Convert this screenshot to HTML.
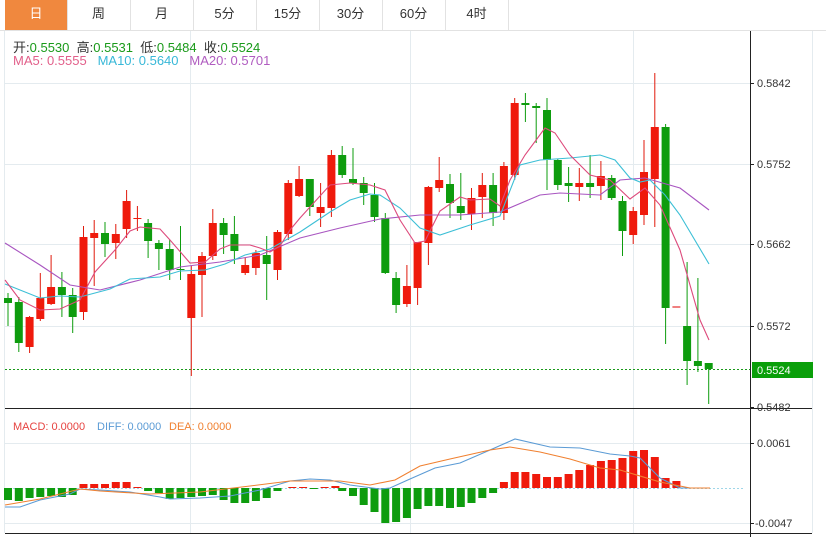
<!DOCTYPE html>
<html><head><meta charset="utf-8"><style>
body{margin:0;width:826px;height:537px;background:#fff;overflow:hidden;font-family:"Liberation Sans","Noto Sans CJK SC",sans-serif;position:relative}
.tabs{position:absolute;left:0;top:0;height:30px;width:826px;border-bottom:1px solid #e2e2e2}
.tab{position:absolute;top:0;height:30px;line-height:28px;text-align:center;font-size:13px;color:#333;border-right:1px solid #e2e2e2}
.on{background:#f0883e;color:#fff}
.info{position:absolute;left:13px;font-size:13px;white-space:pre}
</style></head><body>
<div class="tabs">
<div class="tab on" style="left:5px;width:62px">日</div>
<div class="tab" style="left:67px;width:63px">周</div>
<div class="tab" style="left:130px;width:63px">月</div>
<div class="tab" style="left:193px;width:63px">5分</div>
<div class="tab" style="left:256px;width:63px">15分</div>
<div class="tab" style="left:319px;width:63px">30分</div>
<div class="tab" style="left:382px;width:63px">60分</div>
<div class="tab" style="left:445px;width:63px">4时</div>
</div>
<svg width="826" height="537" style="position:absolute;left:0;top:0">
<g stroke="#e4ebef" stroke-width="1">
<line x1="5" y1="83.5" x2="750" y2="83.5"/><line x1="5" y1="164.5" x2="750" y2="164.5"/><line x1="5" y1="244.5" x2="750" y2="244.5"/><line x1="5" y1="326.5" x2="750" y2="326.5"/>
<line x1="5" y1="443.5" x2="750" y2="443.5"/><line x1="5" y1="523.5" x2="750" y2="523.5"/>
<line x1="190.5" y1="31" x2="190.5" y2="533"/><line x1="410.5" y1="31" x2="410.5" y2="533"/><line x1="633.5" y1="31" x2="633.5" y2="533"/>
<line x1="4.5" y1="31" x2="4.5" y2="533"/><line x1="812.5" y1="31" x2="812.5" y2="533"/>
</g>
<g stroke="#222" stroke-width="1">
<line x1="750.5" y1="31" x2="750.5" y2="537"/>
<line x1="5" y1="408.5" x2="812" y2="408.5"/>
<line x1="5" y1="533.5" x2="812" y2="533.5"/>
<line x1="750" y1="83.5" x2="754" y2="83.5"/><line x1="750" y1="164.5" x2="754" y2="164.5"/><line x1="750" y1="244.5" x2="754" y2="244.5"/><line x1="750" y1="326.5" x2="754" y2="326.5"/><line x1="750" y1="407.5" x2="754" y2="407.5"/>
<line x1="750" y1="443.5" x2="754" y2="443.5"/><line x1="750" y1="523.5" x2="754" y2="523.5"/>
</g>
<g font-size="11" fill="#333" font-family="Liberation Sans,sans-serif">
<text x="757" y="87">0.5842</text><text x="757" y="168">0.5752</text><text x="757" y="248">0.5662</text><text x="757" y="330">0.5572</text><text x="757" y="411">0.5482</text>
<text x="757" y="447">0.0061</text><text x="755" y="527">-0.0047</text>
</g>
<line x1="5" y1="369.5" x2="750" y2="369.5" stroke="#1a9a1a" stroke-dasharray="2,2"/>
<rect x="752" y="362" width="61" height="16" fill="#0a9f0a"/>
<text x="757" y="374" font-size="11" fill="#fff">0.5524</text>
<g fill="#0e9c0e" stroke="#0e9c0e">
<path fill="none" d="M8 293V326M18.8 297V352M61.9 272V317M72.7 288V333M105 222V257M148.1 219V258M158.9 240V270M169.7 240V280M180.5 226V280M223.6 218V254M234.4 216V264M266.7 236V300M309.8 179V216M342.2 146V178M353 148V185M363.7 177V205M374.5 183V222M385.3 213V274M396.1 272V313M450 174V218M460.8 173V220M493.1 173V226M525.4 93V122M536.2 103V143M547 98V190M557.8 159V190M568.6 167V202M590.1 155V198M611.7 175V200M622.5 196V256M665.6 124V344M687.1 262V385M697.9 278V372M708.7 363V404"/>
<g stroke="none">
<rect x="4" y="298" width="8" height="5"/><rect x="14.8" y="302" width="8" height="41"/><rect x="57.9" y="287" width="8" height="8"/><rect x="68.7" y="295" width="8" height="22"/><rect x="101" y="233" width="8" height="11"/><rect x="144.1" y="223" width="8" height="18"/><rect x="154.9" y="243" width="8" height="6"/><rect x="165.7" y="249" width="8" height="21"/><rect x="176.5" y="269" width="8" height="1"/><rect x="219.6" y="223" width="8" height="12"/><rect x="230.4" y="234" width="8" height="17"/><rect x="262.7" y="255" width="8" height="9"/><rect x="305.8" y="179" width="8" height="28"/><rect x="338.2" y="155" width="8" height="20"/><rect x="349" y="179" width="8" height="4"/><rect x="359.7" y="183" width="8" height="10"/><rect x="370.5" y="195" width="8" height="22"/><rect x="381.3" y="218" width="8" height="55"/><rect x="392.1" y="278" width="8" height="27"/><rect x="446" y="184" width="8" height="19"/><rect x="456.8" y="206" width="8" height="7"/><rect x="489.1" y="185" width="8" height="28"/><rect x="521.4" y="103" width="8" height="2"/><rect x="532.2" y="106" width="8" height="2"/><rect x="543" y="110" width="8" height="50"/><rect x="553.8" y="160" width="8" height="25"/><rect x="564.6" y="183" width="8" height="3"/><rect x="586.1" y="183" width="8" height="4"/><rect x="607.7" y="178" width="8" height="20"/><rect x="618.5" y="201" width="8" height="30"/><rect x="661.6" y="127" width="8" height="181"/><rect x="683.1" y="326" width="8" height="35"/><rect x="693.9" y="361" width="8" height="5"/><rect x="704.7" y="363" width="8" height="6"/>
</g></g>
<g fill="#ef1a0c" stroke="#e01a0c">
<path fill="none" d="M29.6 316V353M40.3 273V321M51.1 255V305M83.5 226V320M94.2 220V286M115.8 224V259M126.6 190V238M137.4 206V231M191.3 266V376M202 252V317M212.8 209V260M245.2 258V275M255.9 250V275M277.5 230V280M288.3 180V240M299.1 166V197M320.6 183V227M331.4 150V217M406.9 265V307M417.6 242V305M428.4 186V265M439.2 157V192M471.5 188V230M482.3 173V218M503.9 162V220M514.7 98V180M579.3 168V201M600.9 161V200M633.2 207V244M644 140V225M654.8 73V227"/>
<g stroke="none">
<rect x="25.6" y="317" width="8" height="30"/><rect x="36.3" y="298" width="8" height="21"/><rect x="47.1" y="287" width="8" height="17"/><rect x="79.5" y="237" width="8" height="75"/><rect x="90.2" y="233" width="8" height="5"/><rect x="111.8" y="234" width="8" height="9"/><rect x="122.6" y="201" width="8" height="28"/><rect x="133.4" y="218" width="8" height="1"/><rect x="187.3" y="274" width="8" height="44"/><rect x="198" y="256" width="8" height="19"/><rect x="208.8" y="223" width="8" height="33"/><rect x="241.2" y="265" width="8" height="8"/><rect x="251.9" y="253" width="8" height="15"/><rect x="273.5" y="232" width="8" height="38"/><rect x="284.3" y="183" width="8" height="51"/><rect x="295.1" y="179" width="8" height="17"/><rect x="316.6" y="207" width="8" height="6"/><rect x="327.4" y="155" width="8" height="53"/><rect x="402.9" y="286" width="8" height="18"/><rect x="413.6" y="242" width="8" height="46"/><rect x="424.4" y="187" width="8" height="56"/><rect x="435.2" y="180" width="8" height="8"/><rect x="467.5" y="198" width="8" height="16"/><rect x="478.3" y="185" width="8" height="12"/><rect x="499.9" y="166" width="8" height="47"/><rect x="510.7" y="103" width="8" height="72"/><rect x="575.3" y="183" width="8" height="4"/><rect x="596.9" y="176" width="8" height="10"/><rect x="629.2" y="211" width="8" height="24"/><rect x="640" y="172" width="8" height="43"/><rect x="650.8" y="127" width="8" height="52"/><rect x="672.4" y="306" width="8" height="2" fill="#f08080"/>
</g></g>
<g fill="none" stroke-width="1.1">
<polyline stroke="#a855c0" points="5,243 40,265 70,285 100,290 140,280 180,267 220,262 260,255 300,238 340,228 380,219 420,215 460,215 500,212 540,195 560,193 600,195 620,180 645,178 680,188 709,210"/>
<polyline stroke="#3cbfd6" points="5,284 40,298 60,296 80,297 110,289 130,279 160,277 180,271 205,270 225,264 245,255 270,249 300,232 330,212 350,200 370,194 380,195 400,208 420,228 440,235 470,225 500,216 520,165 540,160 570,158 600,155 615,160 630,178 640,182 650,180 665,195 680,215 709,264"/>
<polyline stroke="#dd4a7c" points="5,280 20,300 40,310 60,309 80,300 95,272 115,250 130,231 140,227 160,229 170,240 190,263 205,262 220,249 230,245 250,245 260,248 270,252 280,246 290,230 300,218 310,207 330,185 350,183 370,185 385,190 400,220 415,243 425,241 440,211 460,197 470,200 490,199 500,206 510,180 525,155 545,128 555,133 570,155 590,175 610,180 630,199 645,188 660,205 680,250 700,320 709,340"/>
</g>
<line x1="5" y1="488.5" x2="745" y2="488.5" stroke="#9fd6e8" stroke-dasharray="2,2"/>
<g fill="#0e9c0e">
<rect x="4" y="488" width="8" height="12"/><rect x="14.8" y="488" width="8" height="13"/><rect x="25.6" y="488" width="8" height="10"/><rect x="36.3" y="488" width="8" height="9"/><rect x="47.1" y="488" width="8" height="8"/><rect x="57.9" y="488" width="8" height="9"/><rect x="68.7" y="488" width="8" height="7"/>
<rect x="144.1" y="488" width="8" height="3"/><rect x="154.9" y="488" width="8" height="5"/><rect x="165.7" y="488" width="8" height="11"/><rect x="176.5" y="488" width="8" height="10"/><rect x="187.3" y="488" width="8" height="9"/><rect x="198" y="488" width="8" height="8"/><rect x="208.8" y="488" width="8" height="7"/><rect x="219.6" y="488" width="8" height="12"/><rect x="230.4" y="488" width="8" height="15"/><rect x="241.2" y="488" width="8" height="15"/><rect x="251.9" y="488" width="8" height="13"/><rect x="262.7" y="488" width="8" height="10"/><rect x="273.5" y="488" width="8" height="3"/><rect x="309.8" y="488" width="8" height="1"/><rect x="338.2" y="488" width="8" height="3"/><rect x="349" y="488" width="8" height="8"/><rect x="359.7" y="488" width="8" height="17"/><rect x="370.5" y="488" width="8" height="24"/><rect x="381.3" y="488" width="8" height="35"/><rect x="392.1" y="488" width="8" height="34"/><rect x="402.9" y="488" width="8" height="30"/><rect x="413.6" y="488" width="8" height="21"/><rect x="424.4" y="488" width="8" height="18"/><rect x="435.2" y="488" width="8" height="18"/><rect x="446" y="488" width="8" height="20"/><rect x="456.8" y="488" width="8" height="19"/><rect x="467.5" y="488" width="8" height="15"/><rect x="478.3" y="488" width="8" height="10"/><rect x="489.1" y="488" width="8" height="5"/>
</g>
<g fill="#ef1a0c">
<rect x="79.5" y="484" width="8" height="4"/><rect x="90.2" y="484" width="8" height="4"/><rect x="101" y="484" width="8" height="4"/><rect x="111.8" y="482" width="8" height="6"/><rect x="122.6" y="482" width="8" height="6"/><rect x="133.4" y="487" width="8" height="1"/><rect x="288.3" y="487" width="8" height="1"/><rect x="299.1" y="487" width="8" height="1"/><rect x="320.6" y="487" width="8" height="1"/><rect x="331.4" y="486" width="8" height="2"/>
<rect x="499.9" y="482" width="8" height="6"/><rect x="510.7" y="472" width="8" height="16"/><rect x="521.4" y="472" width="8" height="16"/><rect x="532.2" y="474" width="8" height="14"/><rect x="543" y="477" width="8" height="11"/><rect x="553.8" y="477" width="8" height="11"/><rect x="564.6" y="474" width="8" height="14"/><rect x="575.3" y="470" width="8" height="18"/><rect x="586.1" y="465" width="8" height="23"/><rect x="596.9" y="461" width="8" height="27"/><rect x="607.7" y="460" width="8" height="28"/><rect x="618.5" y="458" width="8" height="30"/><rect x="629.2" y="451" width="8" height="37"/><rect x="640" y="450" width="8" height="38"/><rect x="650.8" y="457" width="8" height="31"/><rect x="661.6" y="478" width="8" height="10"/><rect x="672.4" y="481" width="8" height="7"/>
</g>
<g fill="none" stroke-width="1.1">
<polyline stroke="#5b9bd5" points="5,507 20,507 40,500 70,494 80,489 100,490 130,492 160,497 170,499 200,498 230,496 260,490 290,481 310,479 330,480 350,485 380,489 390,488 410,479 435,468 460,463 490,450 515,439 550,447 580,448 610,454 630,456 640,458 660,478 680,488 710,488"/>
<polyline stroke="#f08030" points="5,505 40,499 80,489 100,491 150,494 200,492 250,486 290,481 340,481 370,485 395,480 420,466 450,459 490,450 510,447 540,452 570,459 600,468 620,470 660,482 690,488 710,488"/>
</g>
<g font-size="11">
<text x="13" y="430" fill="#e64340">MACD: 0.0000</text>
<text x="97" y="430" fill="#5b9bd5">DIFF: 0.0000</text>
<text x="169" y="430" fill="#f08030">DEA: 0.0000</text>
</g>
</svg>
<div class="info" style="top:37px"><span style="color:#333">开:</span><span style="color:#1a9a1a">0.5530</span>  <span style="color:#333">高:</span><span style="color:#1a9a1a">0.5531</span>  <span style="color:#333">低:</span><span style="color:#1a9a1a">0.5484</span>  <span style="color:#333">收:</span><span style="color:#1a9a1a">0.5524</span></div>
<div class="info" style="top:53px"><span style="color:#e25f8a">MA5: 0.5555</span>   <span style="color:#38b8d8">MA10: 0.5640</span>   <span style="color:#b05cc0">MA20: 0.5701</span></div>
</body></html>
